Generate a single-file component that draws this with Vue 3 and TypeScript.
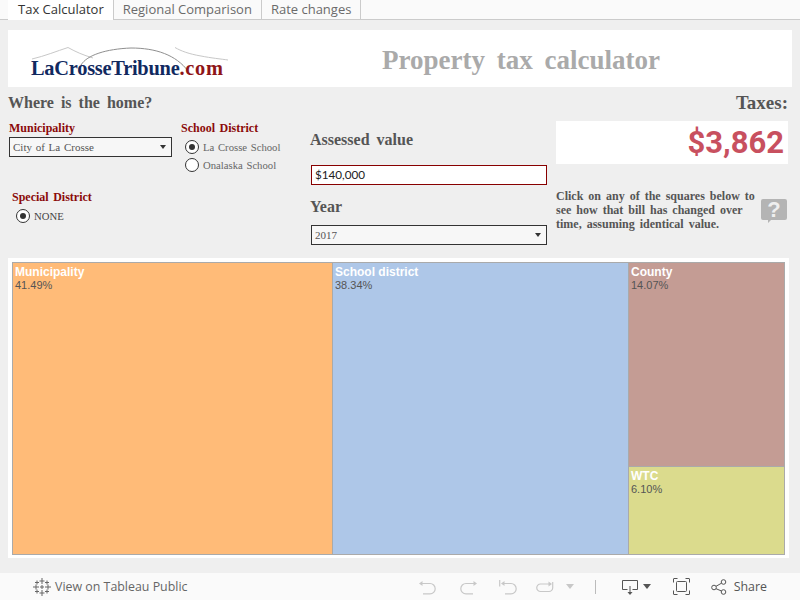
<script setup lang="ts">
interface Tile { name: string; pct: string; cls: string }
const tabs: string[] = ['Tax Calculator', 'Regional Comparison', 'Rate changes']
const municipality: Tile = { name: 'Municipality', pct: '41.49%', cls: 'orange' }
const school: Tile = { name: 'School district', pct: '38.34%', cls: 'blue' }
const stack: Tile[] = [
  { name: 'County', pct: '14.07%', cls: 'rose' },
  { name: 'WTC', pct: '6.10%', cls: 'yellow' },
]
</script>

<template>
  <div class="page">
    <nav class="tabs">
      <div v-for="(t, i) in tabs" :key="t" class="tab" :class="{ active: i === 0 }">{{ t }}</div>
    </nav>

    <main class="dash">
      <header class="banner">
        <div class="logo">
          <svg class="swoosh" width="198" height="28" viewBox="0 0 198 28" fill="none">
            <path d="M1 14C14 11 26 6 37 2.500C45 7 52 10 62 13" stroke="#c8c8c8" stroke-width="1" />
            <path d="M144 2.500C150 6 158 9 170 11C180 13 190 14 197 15" stroke="#c8c8c8" stroke-width="1" />
            <path d="M50 20C56 10 75 4 100 3C125 3 145 10 157 26" stroke="#8f8f8f" stroke-width="1" />
          </svg>
          <span class="navy">LaCrosseTribune</span><span class="red">.com</span>
        </div>
        <h1 class="title">Property tax calculator</h1>
      </header>

      <section class="controls">
        <div class="col-left">
          <h2 class="head where">Where is the home?</h2>
          <div class="left-row">
            <div class="muni">
              <div class="label">Municipality</div>
              <div class="select">City of La Crosse<i class="caret"></i></div>
            </div>
            <div class="schools">
              <div class="label">School District</div>
              <div class="radio-list">
                <div class="radio on"><i class="dot"></i>La Crosse School</div>
                <div class="radio"><i class="dot"></i>Onalaska School</div>
              </div>
            </div>
          </div>
          <div class="special">
            <div class="label">Special District</div>
            <div class="radio on dark"><i class="dot"></i>NONE</div>
          </div>
        </div>

        <div class="col-mid">
          <h2 class="head assessed">Assessed value</h2>
          <div class="input">$140,000</div>
          <h2 class="head year">Year</h2>
          <div class="select wide">2017<i class="caret"></i></div>
        </div>

        <div class="col-right">
          <h2 class="head taxes">Taxes:</h2>
          <div class="total">$3,862</div>
          <div class="hint">
            <p>Click on any of the squares below to see how that bill has changed over time, assuming identical value.</p>
            <svg class="help" width="28" height="25" viewBox="0 0 28 25">
              <path d="M3 1h22a2 2 0 0 1 2 2v17a2 2 0 0 1-2 2H11l-3 3v-3H3a2 2 0 0 1-2-2V3a2 2 0 0 1 2-2z" fill="#b4b4b4" />
              <text x="14" y="19" text-anchor="middle" class="help-q">?</text>
            </svg>
          </div>
        </div>
      </section>

      <section class="frame">
        <div class="treemap">
          <div class="tile w-muni" :class="municipality.cls">
            <b>{{ municipality.name }}</b><span>{{ municipality.pct }}</span>
          </div>
          <div class="tile w-school" :class="school.cls">
            <b>{{ school.name }}</b><span>{{ school.pct }}</span>
          </div>
          <div class="stack">
            <div v-for="t in stack" :key="t.name" class="tile" :class="t.cls">
              <b>{{ t.name }}</b><span>{{ t.pct }}</span>
            </div>
          </div>
        </div>
      </section>
    </main>

    <footer class="foot">
      <div class="public">
        <svg width="18" height="18" viewBox="0 0 18 18" stroke="#666" stroke-width="1" fill="none">
          <path d="M9 0v6M6.500 3h5M9 12v6M6.500 15h5M0 9h6M3 6.500v5M12 9h6M15 6.500v5M4 2.500v4M2 4.500h4M14 2.500v4M12 4.500h4M4 11.500v4M2 13.500h4M14 11.500v4M12 13.500h4M9 7v4M7 9h4" />
        </svg>
        <span>View on Tableau Public</span>
      </div>
      <div class="tools">
        <svg class="t1" width="18" height="16" viewBox="0 0 18 16" fill="none" stroke="#c8c8c8" stroke-width="1.200">
          <path d="M3 4.500h8a5.200 5.200 0 0 1 0 10.400H4" />
          <path d="M0 4.500 3.500 2v5z" fill="#c8c8c8" stroke="none" />
        </svg>
        <svg class="t2" width="18" height="16" viewBox="0 0 18 16" fill="none" stroke="#c8c8c8" stroke-width="1.200">
          <path d="M15 4.500H7a5.200 5.200 0 0 0 0 10.400h7" />
          <path d="M18 4.500 14.500 2v5z" fill="#c8c8c8" stroke="none" />
        </svg>
        <svg class="t3" width="18" height="16" viewBox="0 0 18 16" fill="none" stroke="#c8c8c8" stroke-width="1.200">
          <path d="M.7 1v6.500M5 4.500h7a5.200 5.200 0 0 1 0 10.400H6" />
          <path d="M2 4.500 5.500 2v5z" fill="#c8c8c8" stroke="none" />
        </svg>
        <svg class="t4" width="18" height="14" viewBox="0 0 18 14" fill="none" stroke="#c8c8c8" stroke-width="1.200">
          <path d="M13 4H4.500a3.700 3.700 0 0 0 0 7.500H13a3.700 3.700 0 0 0 3.700-3.700V2" />
          <path d="M16 4 12.500 1.500v5z" fill="#c8c8c8" stroke="none" />
        </svg>
        <i class="tri light t5"></i>
        <i class="sep"></i>
        <svg class="t6" width="16" height="18" viewBox="0 0 16 18" fill="none" stroke="#555" stroke-width="1">
          <path d="M5.500 11.500h-5v-9h15v9h-5M8 8v7" />
          <path d="M5.500 14h5L8 17z" fill="#555" stroke="none" />
        </svg>
        <i class="tri t7"></i>
        <svg class="t8" width="17" height="17" viewBox="0 0 17 17" fill="none" stroke="#555" stroke-width="1">
          <path d="M4.500.5H1a.5.500 0 0 0-.5.500v3.500M12.500.5H16a.5.500 0 0 1 .5.500v3.500M4.500 16.500H1a.5.500 0 0 1-.5-.500v-3.500M12.500 16.500H16a.5.500 0 0 0 .5-.500v-3.500" />
          <rect x="3.500" y="3.500" width="10" height="10" rx="1" />
        </svg>
        <div class="share">
          <svg width="16" height="16" viewBox="0 0 16 16" fill="none" stroke="#555" stroke-width="1">
            <circle cx="3" cy="8.500" r="2.300" /><circle cx="12.500" cy="3" r="2.300" /><circle cx="12.500" cy="13" r="2.300" />
            <path d="M5 7.300 10.500 4.200M5 9.700l5.500 2.300" />
          </svg>
          <span>Share</span>
        </div>
      </div>
    </footer>
  </div>
</template>

<style>
html, body { margin: 0; padding: 0; }
</style>

<style scoped>
.page {
  width: 800px;
  height: 600px;
  overflow: hidden;
  background: #efefef;
  display: flex;
  flex-direction: column;
  font-family: "Liberation Serif", serif;
}
.tabs {
  height: 19px;
  display: flex;
  padding-left: 8px;
  background: #fafafa;
  border-bottom: 1px solid #cbcbcb;
  font-family: "Open Sans", sans-serif;
  font-size: 13px;
  color: #6a6a6a;
}
.tab {
  padding: 0 9px;
  line-height: 19px;
  height: 19px;
  border-right: 1px solid #cbcbcb;
}
.tab.active {
  height: 20px;
  padding-left: 10px;
  background: #fff;
  color: #333;
}
.dash {
  flex: 1;
  padding: 10px 8px 0;
  display: flex;
  flex-direction: column;
}
.banner {
  height: 57px;
  background: #fff;
  position: relative;
  display: flex;
  align-items: center;
}
.logo {
  position: relative;
  margin: 18px 0 0 23px;
  width: 200px;
  font-weight: 700;
  font-size: 20.400px;
  line-height: 24px;
  white-space: nowrap;
}
.swoosh { position: absolute; left: 0; top: -11px; }
.navy { color: #11295f; position: relative; letter-spacing: -0.250px; }
.red { color: #8f1518; position: relative; letter-spacing: 0.700px; }
.title {
  margin: 4px 0 0 151px;
  font-size: 27px;
  font-weight: 700;
  color: #aaa;
  word-spacing: 5px;
  white-space: nowrap;
}
.controls {
  height: 171px;
  display: flex;
}
.head {
  margin: 0;
  font-weight: 700;
  color: #555;
  font-size: 16px;
  line-height: 18px;
  word-spacing: 3px;
}
.col-left { width: 302px; }
.where { margin-top: 7px; }
.left-row { display: flex; margin-top: 9px; }
.label {
  color: #8b0a0a;
  font-weight: 700;
  font-size: 12px;
  line-height: 14px;
  word-spacing: 1.500px;
  padding-left: 1px;
}
.muni { width: 172px; }
.muni .select { margin: 2px 0 0 1px; width: 163px; }
.select {
  box-sizing: border-box;
  height: 20px;
  border: 1px solid #333;
  background: #f7f7f7;
  color: #555;
  font-size: 11px;
  line-height: 18px;
  padding-left: 3px;
  position: relative;
  word-spacing: 1px;
}
.caret {
  position: absolute;
  right: 5px;
  top: 7px;
  border: 3.500px solid transparent;
  border-top: 4px solid #333;
  border-bottom: 0;
}
.radio-list { margin: 3px 0 0 5px; }
.radio {
  display: flex;
  align-items: center;
  gap: 4px;
  height: 18px;
  color: #666;
  font-size: 10.700px;
  word-spacing: 1px;
}
.dot {
  box-sizing: border-box;
  width: 14px;
  height: 14px;
  border-radius: 50%;
  border: 1px solid #333;
  background: #fff;
  position: relative;
}
.radio.on .dot::after {
  content: "";
  position: absolute;
  left: 3px;
  top: 3px;
  width: 6px;
  height: 6px;
  border-radius: 50%;
  background: #333;
}
.radio.dark { color: #444; }
.special { margin: 16px 0 0 3px; }
.special .radio { margin: 3px 0 0 5px; }
.col-mid { width: 237px; padding-right: 9px; }
.assessed { margin: 44px 0 0 0; }
.input {
  box-sizing: border-box;
  margin: 16px 0 0 1px;
  width: 236px;
  height: 20px;
  border: 1px solid #800;
  background: #fff;
  color: #222;
  font-family: Lato, sans-serif;
  font-size: 11.700px;
  line-height: 16px;
  padding-left: 3px;
}
.year { margin-top: 13px; }
.select.wide { margin: 9px 0 0 1px; width: 236px; }
.col-right { width: 232px; }
.taxes { margin-top: 7px; text-align: right; font-size: 19px; }
.total {
  margin-top: 9px;
  height: 43px;
  background: #fff;
  color: #c8505f;
  font-family: Roboto, sans-serif;
  font-weight: 700;
  font-size: 31px;
  line-height: 43px;
  text-align: right;
  padding-right: 4px;
}
.hint { display: flex; margin-top: 25px; gap: 2px; align-items: center; }
.hint p {
  margin: 0;
  width: 202px;
  font-size: 12px;
  line-height: 14px;
  font-weight: 700;
  color: #555;
  word-spacing: 2px;
}
.help-q { font: 700 22px "Liberation Sans", sans-serif; fill: #efefef; }
.frame {
  width: 781px;
  height: 300px;
  box-sizing: border-box;
  background: #fff;
  padding: 4px 4px 3px;
}
.treemap {
  height: 293px;
  display: flex;
  box-sizing: border-box;
  background: #aaa;
  font-family: "Liberation Sans", sans-serif;
  font-size: 11px;
  line-height: 13px;
  gap: 1px;
  padding: 1px;
}
.tile {
  padding: 3px 2px;
  display: flex;
  flex-direction: column;
  align-items: flex-start;
  color: #555;
  box-sizing: border-box;
}
.tile b { color: #fff; font-size: 12px; }
.w-muni { width: 319px; }
.w-school { width: 295px; }
.stack { flex: 1; display: flex; flex-direction: column; gap: 1px; }
.stack .tile:first-child { height: 203px; }
.stack .tile:last-child { flex: 1; }
.orange { background: #ffbb78; }
.blue { background: #aec7e8; }
.rose { background: #c49c94; }
.yellow { background: #dbdb8d; }
.foot {
  height: 27px;
  background: #fafafa;
  display: flex;
  align-items: center;
  color: #666;
  font-family: "Open Sans", sans-serif;
  font-size: 12.400px;
  font-weight: 500;
}
.public { display: flex; align-items: center; gap: 4px; margin-left: 33px; }
.tools { display: flex; align-items: center; margin-left: auto; padding-right: 33px; }
.t2 { margin-left: 22px; }
.t3 { margin-left: 22px; }
.t4 { margin-left: 19px; }
.tri {
  display: block;
  border: 4px solid transparent;
  border-top: 5px solid #555;
  border-bottom: 0;
}
.tri.light { border-top-color: #c8c8c8; }
.t5 { margin-left: 12px; }
.sep { display: block; width: 1px; height: 14px; background: #bbb; margin-left: 21px; }
.t6 { margin-left: 26px; }
.t7 { margin-left: 5px; }
.t8 { margin-left: 22px; }
.share { display: flex; align-items: center; gap: 7px; margin-left: 21px; color: #555; }
</style>
